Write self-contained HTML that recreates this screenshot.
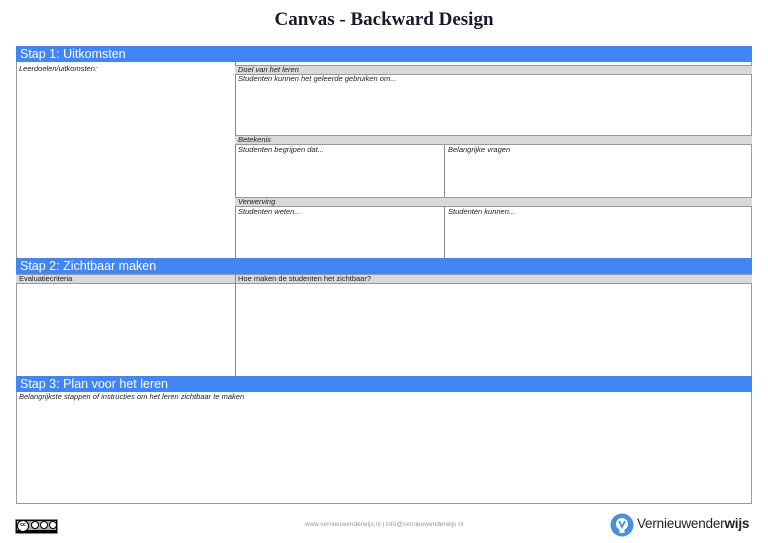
<!DOCTYPE html>
<html><head><meta charset="utf-8"><style>
*{margin:0;padding:0;box-sizing:border-box}
body{width:768px;height:543px;background:#fff;position:relative;overflow:hidden;font-family:"Liberation Sans",sans-serif}
.a{position:absolute}
.blue{background:#4285f4;color:#fff;font-size:12.5px;line-height:16px;padding-left:4px}
.gray{background:#d9d9d9;border-top:1px solid #999;border-bottom:1px solid #999;font-size:7.5px;font-style:italic;line-height:8px;padding-left:3px;color:#222}
.t{font-size:7.5px;font-style:italic;color:#222;line-height:9px;padding-left:3px}
.vl{background:#888;width:1px}
</style></head><body>
<div class="a" style="left:0;width:768px;top:9px;text-align:center;font-family:'Liberation Serif',serif;font-weight:bold;font-size:19px;color:#1a1a2a">Canvas - Backward Design</div>

<div class="a" style="left:16px;top:46px;width:736px;height:458px;border:1px solid #999"></div>

<div class="a blue" style="left:16px;top:46px;width:736px;height:16px">Stap 1: Uitkomsten</div>
<div class="a t" style="left:16px;top:64px">Leerdoelen/uitkomsten:</div>
<div class="a vl" style="left:235px;top:62px;height:196px"></div>
<div class="a gray" style="left:235px;top:65px;width:517px;height:10px">Doel van het leren</div>
<div class="a t" style="left:235px;top:74px">Studenten kunnen het geleerde gebruiken om...</div>
<div class="a gray" style="left:235px;top:135px;width:517px;height:10px">Betekenis</div>
<div class="a t" style="left:235px;top:145px">Studenten begrijpen dat...</div>
<div class="a vl" style="left:444px;top:145px;height:52px"></div>
<div class="a t" style="left:445px;top:145px">Belangrijke vragen</div>
<div class="a gray" style="left:235px;top:197px;width:517px;height:10px">Verwerving</div>
<div class="a t" style="left:235px;top:207px">Studenten weten...</div>
<div class="a vl" style="left:444px;top:207px;height:51px"></div>
<div class="a t" style="left:445px;top:207px">Studenten kunnen...</div>

<div class="a blue" style="left:16px;top:258px;width:736px;height:16px">Stap 2: Zichtbaar maken</div>
<div class="a gray" style="left:16px;top:274px;width:736px;height:10px;font-style:normal">Evaluatiecriteria</div>
<div class="a t" style="left:235px;top:274px;font-style:normal">Hoe maken de studenten het zichtbaar?</div>
<div class="a vl" style="left:235px;top:274px;height:102px"></div>

<div class="a blue" style="left:16px;top:376px;width:736px;height:16px">Stap 3: Plan voor het leren</div>
<div class="a t" style="left:16px;top:392px">Belangrijkste stappen of instructies om het leren zichtbaar te maken</div>

<div class="a" style="left:15px;top:519px;width:43px;height:15px;background:#000;border:1px solid #888;border-radius:1px">
 <div class="a" style="left:1px;top:1px;width:39px;height:9px;background:#aaa"></div>
 <div class="a" style="left:1px;top:0;width:12px;height:12px;border-radius:50%;background:#fff;border:1.5px solid #000;font-size:5px;line-height:9px;text-align:center;font-weight:bold">cc</div>
 <div class="a" style="left:15px;top:1px;width:8px;height:8px;border-radius:50%;background:#fff;border:1px solid #000"></div>
 <div class="a" style="left:24px;top:1px;width:8px;height:8px;border-radius:50%;background:#fff;border:1px solid #000"></div>
 <div class="a" style="left:33px;top:1px;width:8px;height:8px;border-radius:50%;background:#fff;border:1px solid #000"></div>
</div>

<div class="a" style="left:0;width:768px;top:521px;text-align:center;font-size:6.5px;color:#999">www.vernieuwenderwijs.nl | info@vernieuwenderwijs.nl</div>

<svg class="a" style="left:610px;top:513px" width="24" height="24" viewBox="0 0 24 24">
<circle cx="12" cy="12" r="11.5" fill="#4a90e2"/>
<circle cx="12" cy="11" r="6" fill="#fff"/>
<rect x="9.5" y="16" width="5" height="4" fill="#fff"/>
<path d="M9 8 L12 14 L15 8" stroke="#4a90e2" stroke-width="1.8" fill="none"/>
</svg>
<div class="a" style="left:637px;top:516px;font-size:13.5px;color:#222;letter-spacing:-0.2px">Vernieuwender<b>wijs</b></div>
</body></html>
